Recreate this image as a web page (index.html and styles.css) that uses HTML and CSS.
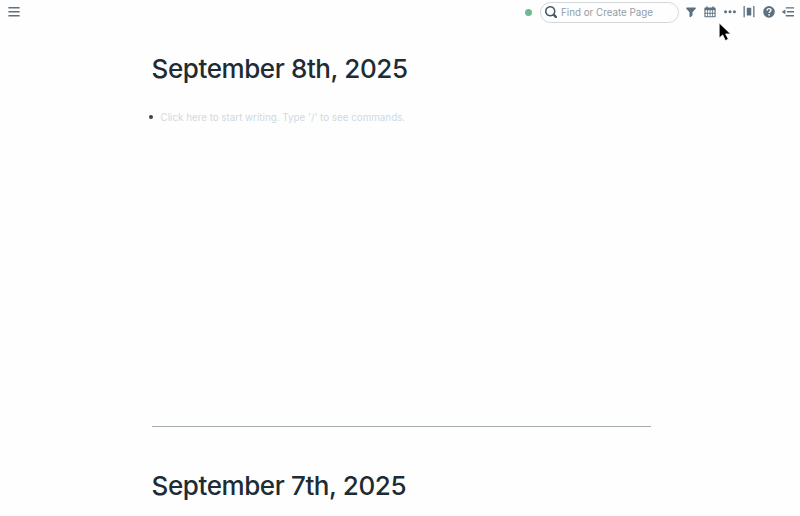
FILE: index.html
```html
<!DOCTYPE html>
<html lang="en">
<head>
<meta charset="utf-8">
<title>Daily Notes</title>
<link rel="stylesheet" href="styles.css">
</head>
<body>
<header class="topbar">
  <svg class="icon" viewBox="0 0 16 16"><path d="M.5 1.300h15v2H.5zM.5 6.700h15v2H.5zM.5 12h15v2H.5z"/></svg>
  <div class="tools">
    <span class="status"></span>
    <div class="search">
      <svg class="icon" viewBox="0 0 16 16"><path d="M15.55 13.43l-2.67-2.68a6.94 6.94 0 0 0 1.11-3.76c0-3.87-3.13-7-7-7s-7 3.13-7 7 3.13 7 7 7c1.39 0 2.68-.42 3.76-1.11l2.68 2.67a1.5 1.5 0 1 0 2.12-2.12zm-8.56-1.44c-2.76 0-5-2.24-5-5s2.24-5 5-5 5 2.24 5 5-2.24 5-5 5z"/></svg>
      <span>Find or Create Page</span>
    </div>
    <nav class="actions">
      <svg class="icon" viewBox="0 0 16 16"><path d="M13.500 2H2.500c-.95 0-1.300 1.100-.7 1.700L6 8.400V14c0 .9 1 1.300 1.700.7l2-2c.2-.2.3-.4.3-.7V8.400l4.200-4.700c.6-.6.2-1.700-.700-1.700z"/></svg>
      <svg class="icon" viewBox="0 0 16 16"><path fill-rule="evenodd" d="M1.500 2H3V.5h2V2h6V.5h2V2h1.500c.5 0 1 .5 1 1v11c0 .6-.5 1-1 1h-13c-.6 0-1-.4-1-1V3c0-.5.4-1 1-1zM2 5.500v3.500h2.300V5.500zM5.300 5.500v3.500h2.300V5.500zM8.600 5.500v3.500h2.300V5.500zM11.900 5.500v3.500H14V5.500zM2 10.200v3.300h2.300v-3.300zM5.300 10.200v3.300h2.300v-3.300zM8.600 10.200v3.300h2.300v-3.300zM11.900 10.200v3.300H14v-3.300z"/></svg>
      <svg class="icon" viewBox="0 0 16 16"><circle cx="2.100" cy="7.800" r="2"/><circle cx="8" cy="7.800" r="2"/><circle cx="13.900" cy="7.800" r="2"/></svg>
      <svg class="icon" viewBox="0 0 16 16"><path d="M.7 0h1.700v15H.7zM13.600 0h1.700v15h-1.700zM5 2.300h6v10.500H5z"/></svg>
      <svg class="icon" viewBox="0 0 16 16"><circle cx="8" cy="7.800" r="7.700"/><path class="cut" d="M5.500 6C5.500 4.300 6.500 3.500 8 3.500s2.600.8 2.600 2.200c0 1.800-2.400 1.900-2.400 3.500"/><circle class="dot" cx="8.100" cy="11.800" r="1.200"/></svg>
      <svg class="icon" viewBox="0 0 16 16"><path d="M5 1.500h11v1.900H5zM6.500 6.800H16v1.900H6.500zM5 12h11v1.900H5zM.300 7.300 4.500 4.600v6.400L.300 8.300z"/></svg>
    </nav>
  </div>
</header>
<main class="log">
  <section class="day">
    <h1>September 8th, 2025</h1>
    <div class="block"><span class="bullet"></span><span>Click here to start writing. Type '/' to see commands.</span></div>
  </section>
  <section class="day last">
    <h1>September 7th, 2025</h1>
  </section>
</main>
<svg class="cursor" viewBox="0 0 14 19"><path d="M1.200 1v15l3.500-3.100 2.700 5.600 2.900-1.300-2.700-5.300h5z"/></svg>
</body>
</html>
```
FILE: styles.css
```css
body {
  margin: 0;
  height: 516px;
  overflow: hidden;
  background: #fefefe;
  color: #202b33;
  font-family: Inter, sans-serif;
}
.topbar {
  display: flex;
  align-items: center;
  justify-content: space-between;
  height: 24px;
  padding: 0 6px 0 8px;
}
.icon {
  display: block;
  width: 12px;
  height: 12px;
  fill: #5c7080;
}
.tools, .search, .actions { display: flex; align-items: center; }
.status {
  width: 7px;
  height: 7px;
  margin-right: 8px;
  border-radius: 50%;
  background: #6dba91;
}
.search {
  box-sizing: border-box;
  width: 139px;
  height: 21px;
  gap: 4px;
  padding-left: 4px;
  border: 1px solid #d3d7da;
  border-radius: 11px;
  color: #929da6;
  font-size: 9.800px;
  white-space: nowrap;
}
.search .icon { fill: #465665; }
.actions { gap: 7.500px; margin: 0 0 0 5.500px; }
.cut { fill: none; stroke: #fefefe; stroke-width: 1.900; }
.dot { fill: #fefefe; }
.log { width: 499px; margin-left: 151.500px; }
.day { box-sizing: border-box; height: 402px; padding-top: 27px; }
.last { height: 90px; padding-top: 40.500px; border-top: 1px solid #a3adb1; }
h1 {
  margin: 0;
  font-size: 26px;
  font-weight: 500;
  line-height: 36px;
  letter-spacing: -0.400px;
}
.block {
  display: flex;
  align-items: center;
  height: 16px;
  margin: 22px 0 0 -2.500px;
  gap: 7.500px;
  color: #ced9e0;
  font-size: 9.800px;
}
.bullet {
  width: 4px;
  height: 4px;
  border-radius: 50%;
  background: #36444f;
}
.cursor {
  position: absolute;
  left: 718px;
  top: 22px;
  width: 14px;
  height: 19px;
  fill: #000;
  stroke: #fff;
  stroke-width: .7;
}
```
